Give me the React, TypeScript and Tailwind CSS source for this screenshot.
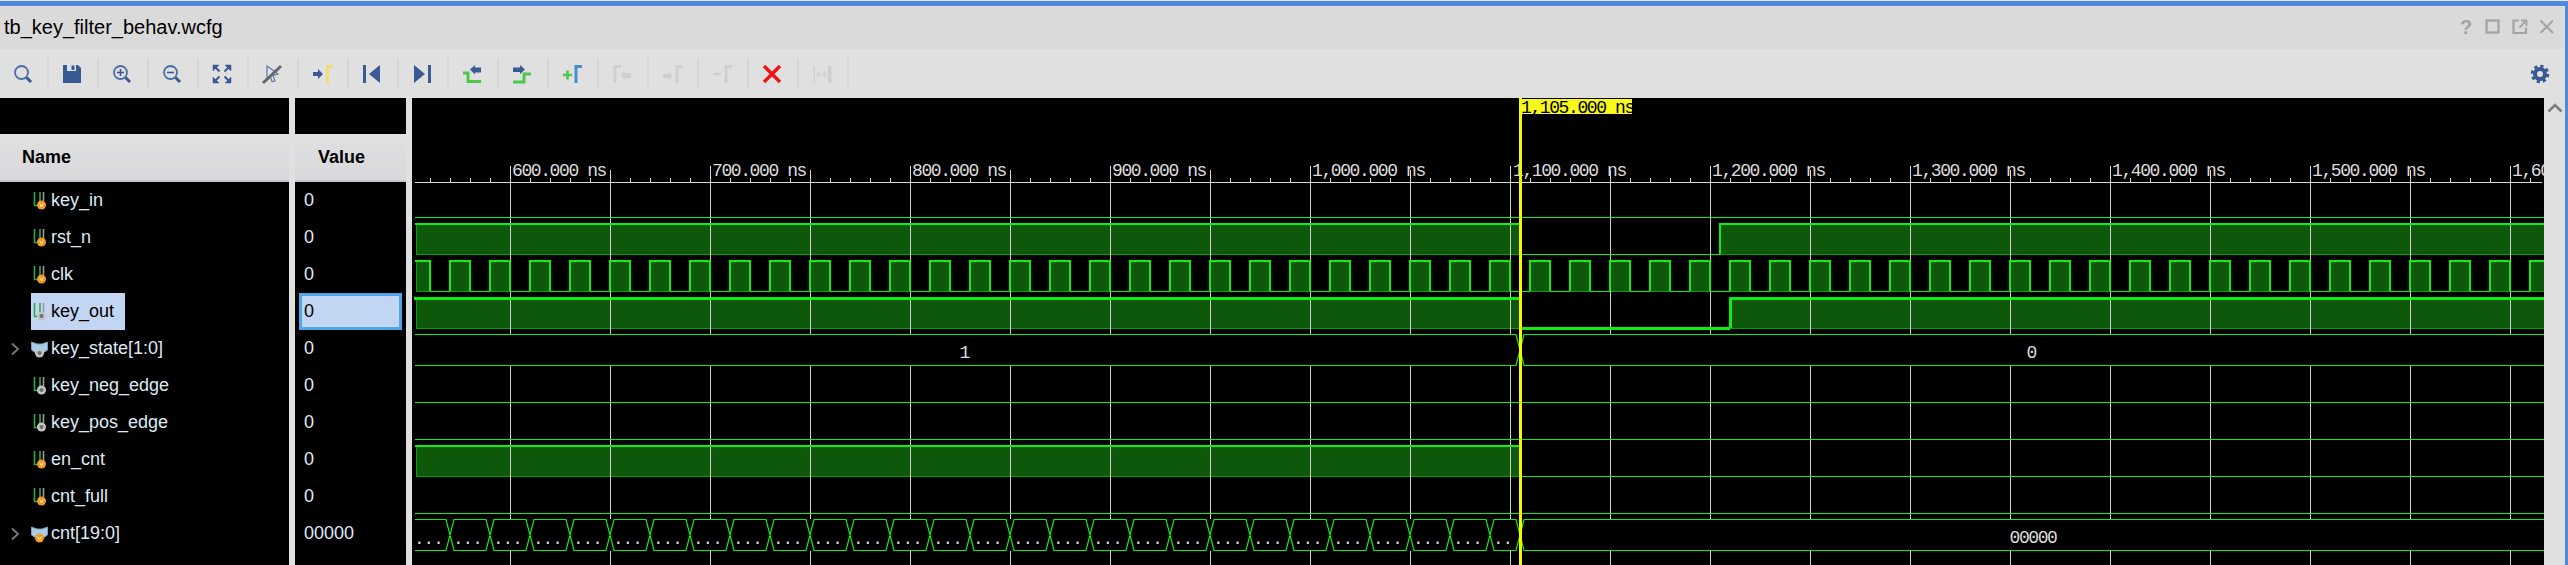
import type { ReactNode } from 'react';

const BLUE = '#3a5a94';
const GREY = '#cfcfcf';
const BRIGHT = '#10ee10';
const DARK_EDGE = '#0a9a0a';
const FILL = '#0e580c';

const X_END = 2544;
const CURSOR = 1520;

type Sig = { name: string; value: string; kind: 'in' | 'reg' | 'bus-in' | 'bus-reg' };

const signals: Sig[] = [
  { name: 'key_in', value: '0', kind: 'in' },
  { name: 'rst_n', value: '0', kind: 'in' },
  { name: 'clk', value: '0', kind: 'in' },
  { name: 'key_out', value: '0', kind: 'reg' },
  { name: 'key_state[1:0]', value: '0', kind: 'bus-reg' },
  { name: 'key_neg_edge', value: '0', kind: 'reg' },
  { name: 'key_pos_edge', value: '0', kind: 'reg' },
  { name: 'en_cnt', value: '0', kind: 'in' },
  { name: 'cnt_full', value: '0', kind: 'in' },
  { name: 'cnt[19:0]', value: '00000', kind: 'bus-in' },
];

function SignalIcon({ kind }: { kind: Sig['kind'] }) {
  const orange = kind === 'in' || kind === 'bus-in';
  const bus = kind === 'bus-in' || kind === 'bus-reg';
  return (
    <svg width="17" height="20" viewBox="0 0 17 20" className="shrink-0">
      {bus ? (
        <path d="M0.5 3 L6 5 H11 L16.5 3 V11 L12 14 H5 L0.5 11 Z" fill="#a9cde6" stroke="#7d9db5" strokeWidth="1" />
      ) : (
        <>
          <path d="M3.5 1 V14.5 H9 V1" fill="none" stroke="#2fa84a" strokeWidth="1.6" />
          <path d="M12.5 1 V10" fill="none" stroke="#9a9a9a" strokeWidth="1.6" />
        </>
      )}
      <circle cx={bus ? 8.5 : 10.5} cy="14" r="4.5" fill={orange ? '#f09a20' : '#c4c4c4'} />
      {orange ? (
        <path
          d={bus ? 'M6.8 12.6 L8.5 16 L10.2 12.6' : 'M8.8 12.6 L10.5 16 L12.2 12.6'}
          fill="none"
          stroke="#fff3d8"
          strokeWidth="1"
        />
      ) : (
        <circle cx={bus ? 8.5 : 10.5} cy="14" r="2" fill="#6e6e6e" />
      )}
    </svg>
  );
}

function Chevron() {
  return (
    <svg width="10" height="14" viewBox="0 0 10 14">
      <path d="M2 1.5 L8 7 L2 12.5" fill="none" stroke="#7a7a7a" strokeWidth="1.8" />
    </svg>
  );
}

function Ico({ children }: { children: ReactNode }) {
  return (
    <svg width="24" height="24" viewBox="0 0 24 24">
      {children}
    </svg>
  );
}

const Lens = ({ mark }: { mark?: 'plus' | 'minus' }) => (
  <>
    <circle cx="10.5" cy="10.5" r="6.5" fill="none" stroke="#4d6ea6" strokeWidth="1.8" />
    <path d="M15.5 15.5 L20 20" stroke={BLUE} strokeWidth="3" />
    {mark && <path d="M7 10.5 H14" stroke={BLUE} strokeWidth="1.6" />}
    {mark === 'plus' && <path d="M10.5 7 V14" stroke={BLUE} strokeWidth="1.6" />}
  </>
);

const toolbar: ReactNode[] = [
  <Lens key="search" />,
  <g key="save">
    <path d="M3 3 H18 L21 6 V21 H3 Z" fill={BLUE} />
    <rect x="7" y="3" width="9" height="6" fill="#dfe3ea" />
    <rect x="11.5" y="3.5" width="3" height="4.5" fill={BLUE} />
  </g>,
  <Lens key="zi" mark="plus" />,
  <Lens key="zo" mark="minus" />,
  <g key="fit" fill={BLUE} stroke={BLUE}>
    <path d="M3 3 H9 L3 9 Z" strokeWidth="0.5" />
    <path d="M21 3 H15 L21 9 Z" strokeWidth="0.5" />
    <path d="M3 21 H9 L3 15 Z" strokeWidth="0.5" />
    <path d="M21 21 H15 L21 15 Z" strokeWidth="0.5" />
    <path d="M5 5 L9.5 9.5 M19 5 L14.5 9.5 M5 19 L9.5 14.5 M19 19 L14.5 14.5" strokeWidth="2" fill="none" />
  </g>,
  <g key="snap">
    <path d="M7 4 L18 12 L13 13.5 L15 19 L12 19.5 L10.5 15 L7 18 Z" fill="#dfe6f0" stroke="#5a78a8" strokeWidth="1.2" />
    <path d="M3 21 L21 4" stroke="#676767" strokeWidth="3" />
  </g>,
  <g key="cursor">
    <path d="M3 10 H8 V7 L13 12 L8 17 V14 H3 Z" fill={BLUE} />
    <path d="M17.5 21 V4.5 H23" fill="none" stroke="#f2db72" strokeWidth="3" />
  </g>,
  <g key="prev" fill={BLUE}>
    <rect x="3" y="3" width="3" height="18" />
    <path d="M20 3 V21 L9 12 Z" />
  </g>,
  <g key="next" fill={BLUE}>
    <rect x="18" y="3" width="3" height="18" />
    <path d="M4 3 V21 L15 12 Z" />
  </g>,
  <g key="ptr">
    <path d="M3 11 H8 V19.5 H21" fill="none" stroke="#4cc94c" strokeWidth="3" />
    <path d="M10 7.5 L15 3 V5.5 H21 V10.5 H15 V12.5 Z" fill={BLUE} />
  </g>,
  <g key="ntr">
    <path d="M3 20 H14 V12 H21" fill="none" stroke="#4cc94c" strokeWidth="3" />
    <path d="M3 5.5 H10 V3 L15 7.5 L10 12 V10 H3 Z" fill={BLUE} />
  </g>,
  <g key="add">
    <path d="M3 13 H12 M7.5 8.5 V17.5" stroke="#4cc94c" strokeWidth="2.6" />
    <path d="M16 21 V4.5 H22" fill="none" stroke="#4a90c8" strokeWidth="3" />
  </g>,
  <g key="d1">
    <path d="M5 21 V4.5 H11" fill="none" stroke={GREY} strokeWidth="3" />
    <path d="M10 13 L15 9 V11 H21 V16 H15 V18 Z" fill={GREY} />
  </g>,
  <g key="d2">
    <path d="M3 12 H8 V10 L13 14 L8 18.5 V16 H3 Z" fill={GREY} />
    <path d="M17 21 V4.5 H23" fill="none" stroke={GREY} strokeWidth="3" />
  </g>,
  <g key="d3">
    <path d="M3 12 H11" stroke={GREY} strokeWidth="2.4" />
    <path d="M16 21 V4.5 H22" fill="none" stroke={GREY} strokeWidth="3" />
  </g>,
  <path key="x" d="M4 4 L20 20 M20 4 L4 20" stroke="#f01414" strokeWidth="3.4" />,
  <g key="d4">
    <rect x="3.5" y="4" width="1.5" height="17" fill={GREY} />
    <rect x="18" y="4" width="3.5" height="17" fill={GREY} />
    <path d="M7 12.5 H16 M7 12.5 L9.5 10 M7 12.5 L9.5 15 M16 12.5 L13.5 10 M16 12.5 L13.5 15" stroke={GREY} strokeWidth="1.2" fill="none" />
  </g>,
];

const gridXs = Array.from({ length: 21 }, (_, i) => 510 + i * 100);
const labels = [
  ['600.000 ns', 512],
  ['700.000 ns', 712],
  ['800.000 ns', 912],
  ['900.000 ns', 1112],
  ['1,000.000 ns', 1312],
  ['1,100.000 ns', 1513],
  ['1,200.000 ns', 1712],
  ['1,300.000 ns', 1912],
  ['1,400.000 ns', 2112],
  ['1,500.000 ns', 2312],
  ['1,600.000 ns', 2512],
] as const;

function smallTicks() {
  let d = '';
  for (let x = 430; x < X_END - 2; x += 20) {
    if ((x - 510) % 100 !== 0) d += `M${x} 178V182`;
  }
  return d;
}

function majorTicks() {
  let d = '';
  for (let x = 510; x < X_END; x += 100) {
    d += `M${x} ${(x - 510) % 200 === 0 ? 166 : 170}V182`;
  }
  return d;
}

// spans where the signal is high: edges and tops are heavier than the low runs
function Digital({ top, bottom, spans, thick }: { top: number; bottom: number; spans: [number, number][]; thick?: boolean }) {
  const start = thick ? 414 : 415;
  let high = '';
  let low = '';
  let cur = start;
  spans.forEach(([a, b]) => {
    if (a > cur) low += `M${cur} ${bottom + 0.5}H${a}`;
    high += a <= start + 1 ? `M${a} ${top}H${b}` : `M${a} ${bottom}V${top}H${b}`;
    if (b < X_END) high += `V${bottom}`;
    cur = b;
  });
  if (cur < X_END) low += `M${cur} ${bottom + 0.5}H${X_END}`;
  return (
    <g fill="none" stroke={BRIGHT} shapeRendering="crispEdges">
      <path d={low} strokeWidth={thick ? 3 : 1} />
      <path d={high} strokeWidth={thick ? 3 : 2} />
    </g>
  );
}

function Fills({ top, bottom, spans }: { top: number; bottom: number; spans: [number, number][] }) {
  return (
    <g shapeRendering="crispEdges">
      {spans.map(([a, b]) => (
        <rect key={a} x={a} y={top} width={b - a} height={bottom - top} fill={FILL} stroke={DARK_EDGE} strokeWidth="1" />
      ))}
    </g>
  );
}

function busPath(top: number, bottom: number, edges: number[]) {
  // both strands run from 415 to the end and swap at each edge
  let a = `M415 ${top}`;
  let b = `M415 ${bottom}`;
  let aTop = true;
  for (const e of edges) {
    aTop = !aTop;
    a += `H${e - 4}L${e + 4} ${aTop ? top : bottom}`;
    b += `H${e - 4}L${e + 4} ${aTop ? bottom : top}`;
  }
  return `${a}H${X_END}${b}H${X_END}`;
}

const clkSpans: [number, number][] = [[416, 430]];
for (let x = 450; x < X_END; x += 40) clkSpans.push([x, Math.min(x + 20, X_END)]);

const cntEdges: number[] = [];
for (let x = 450; x < CURSOR; x += 40) cntEdges.push(x);
cntEdges.push(CURSOR);

function Waves() {
  const mono = { fontFamily: '"Liberation Mono", monospace' };
  return (
    <svg width="2132" height="467" viewBox="412 98 2132 467" className="block shrink-0">
      <rect x="412" y="98" width="2132" height="467" fill="#000" />

      <Fills top={223} bottom={254} spans={[[416, CURSOR], [1720, X_END + 2]]} />
      <Fills top={297} bottom={328} spans={[[416, CURSOR], [1730, X_END + 2]]} />
      <Fills top={446} bottom={476} spans={[[416, CURSOR]]} />
      <Fills top={260} bottom={291} spans={clkSpans} />

      <g stroke="#cfcfcf" strokeWidth="1" shapeRendering="crispEdges">
        {gridXs.map((x) => (
          <path key={x} d={`M${x + 0.5} 182V565`} />
        ))}
      </g>
      <rect x="413" y="334" width="2131" height="32" fill="#000" />
      <rect x="413" y="519" width="2131" height="32" fill="#000" />

      <g shapeRendering="crispEdges" fill="none" stroke="#d8d8d8" strokeWidth="1">
        <path d={`M415 182.5H${X_END - 2}`} />
        <path d={smallTicks()} transform="translate(0.5 0)" />
        <path d={majorTicks()} transform="translate(0.5 0)" />
      </g>
      {labels.map(([t, x]) => (
        <text key={x} x={x} y="176" fill="#dcdcdc" fontSize="18" letterSpacing="-1.4" style={mono}>
          {t}
        </text>
      ))}

      <g fill="none" stroke={BRIGHT} strokeWidth="1" shapeRendering="crispEdges">
        <path d={`M415 217.5H${X_END}`} />
        <path d={`M415 402.5H${X_END}`} />
        <path d={`M415 439.5H${X_END}`} />
        <path d={`M415 513.5H${X_END}`} />
      </g>
      <Digital top={224} bottom={254} spans={[[415, CURSOR], [1720, X_END]]} />
      <Digital top={261} bottom={291} spans={[[415, 430], ...clkSpans.slice(1)]} />
      <Digital top={298} bottom={328} spans={[[414, CURSOR], [1730, X_END]]} thick />
      <Digital top={446} bottom={476} spans={[[415, CURSOR]]} />

      <path d={busPath(334.5, 365.5, [CURSOR])} fill="none" stroke={BRIGHT} strokeWidth="1.2" />
      <path d={busPath(519.5, 550.5, cntEdges)} fill="none" stroke={BRIGHT} strokeWidth="1.2" />

      <text x="965" y="358" fill="#dcdcdc" fontSize="18" textAnchor="middle" style={mono}>
        1
      </text>
      <text x="2032" y="358" fill="#dcdcdc" fontSize="18" textAnchor="middle" style={mono}>
        0
      </text>
      <text x="2033" y="543" fill="#dcdcdc" fontSize="18" letterSpacing="-1.4" textAnchor="middle" style={mono}>
        00000
      </text>
      {cntEdges.slice(0, -2).map((e) => (
        <text key={e} x={e + 3.5} y="544" fill="#e8e8e8" fontSize="16" style={mono}>
          ...
        </text>
      ))}
      <text x="414.5" y="544" fill="#e8e8e8" fontSize="16" style={mono}>
        ...
      </text>
      <text x="1493.5" y="544" fill="#e8e8e8" fontSize="16" style={mono}>
        ..
      </text>

      <rect x="1519" y="98" width="3" height="467" fill="#f6f600" />
      <rect x="1520" y="99" width="112" height="15" fill="#f8f81c" />
      <svg x="1520" y="99" width="112" height="15" viewBox="1520 99 112 15">
        <text x="1521" y="113" fill="#000" fontSize="18" letterSpacing="-1.4" style={mono}>
          1,105.000 ns
        </text>
      </svg>
    </svg>
  );
}

export default function App() {
  return (
    <div className="h-[565px] w-[2568px] overflow-hidden bg-[#e0e0e0] font-['Liberation_Sans'] flex flex-col">
      <div className="h-px bg-[#dfe8f6]" />
      <div className="h-[5px] bg-[#5088dc]" />
      <div className="flex flex-1 min-h-0">
        <div className="flex flex-col flex-1 min-w-0">
          <div className="h-[43px] bg-[#dadada] flex items-center pl-1 pb-[2px] text-[20px] text-black">
            <span className="flex-1">tb_key_filter_behav.wcfg</span>
            <div className="flex items-center gap-[9px] pr-[9px] text-[#a3a3a3]">
              <span className="w-[18px] text-center text-[20px] font-bold leading-none">?</span>
              <svg width="18" height="18" viewBox="0 0 18 18">
                <rect x="2.5" y="2.5" width="12" height="12" fill="none" stroke="#a3a3a3" strokeWidth="2.2" />
              </svg>
              <svg width="18" height="18" viewBox="0 0 18 18">
                <path d="M8 2.5 H2.5 V15 H15 V9.5" fill="none" stroke="#a3a3a3" strokeWidth="2.2" />
                <path d="M8.5 9.5 L14 4 M10 2.5 H15.5 V8" fill="none" stroke="#a3a3a3" strokeWidth="1.8" />
              </svg>
              <svg width="18" height="18" viewBox="0 0 18 18">
                <path d="M2.5 2.5 L15 15 M15 2.5 L2.5 15" fill="none" stroke="#a3a3a3" strokeWidth="2" />
              </svg>
            </div>
          </div>
          <div className="h-[49px] bg-[#e0e0e0] flex items-center">
            {toolbar.map((icon, i) => (
              <div
                key={i}
                className={`${i === 0 ? 'w-[49px]' : 'w-[50px]'} h-[31px] pr-[2px] flex items-center justify-center border-r-2 border-[#d6d6d6]`}
              >
                <Ico>{icon}</Ico>
              </div>
            ))}
            <div className="flex-1" />
            <svg width="20" height="20" viewBox="0 0 20 20" className="mr-[15px]">
              <circle cx="10" cy="10" r="7.8" fill="none" stroke={BLUE} strokeWidth="3" strokeDasharray="3.2 2.93" />
              <circle cx="10" cy="10" r="5" fill="none" stroke={BLUE} strokeWidth="4" />
            </svg>
          </div>
          <div className="flex flex-1 min-h-0 bg-[#e0e0e0]">
            <div className="w-[289px] bg-black flex flex-col">
              <div className="h-9" />
              <div className="h-[48px] bg-linear-to-b from-[#e0e0e0] to-[#d9d9dd] border-b-2 border-[#c8c8c8] flex items-center pl-[22px] text-[18px] font-bold text-black">
                Name
              </div>
              {signals.map((s) => {
                const selected = s.name === 'key_out';
                return (
                  <div key={s.name} className="h-[37px] flex items-center text-[18px] shrink-0">
                    <div className="w-[31px] flex justify-center pr-[2px]">{s.kind.startsWith('bus') && <Chevron />}</div>
                    <div
                      className={`h-[37px] flex items-center gap-[3px] ${selected ? 'bg-[#c2d5f2] text-black pr-[11px]' : 'text-[#dfe9f4]'}`}
                    >
                      <SignalIcon kind={s.kind} />
                      <span>{s.name}</span>
                    </div>
                  </div>
                );
              })}
            </div>
            <div className="w-[111px] ml-[6px] bg-black flex flex-col">
              <div className="h-9" />
              <div className="h-[48px] bg-linear-to-b from-[#e0e0e0] to-[#d9d9dd] border-b-2 border-[#c8c8c8] flex items-center pl-[23px] text-[18px] font-bold text-black">
                Value
              </div>
              {signals.map((s) =>
                s.name === 'key_out' ? (
                  <div key={s.name} className="h-[37px] ml-1 mr-1 bg-[#c2d5f2] border-[3px] border-[#4fa5e5] flex items-center pl-[2px] text-[18px] text-black shrink-0">
                    {s.value}
                  </div>
                ) : (
                  <div key={s.name} className="h-[37px] flex items-center pl-[9px] text-[18px] text-[#dfe9f4] shrink-0">
                    {s.value}
                  </div>
                ),
              )}
            </div>
            <div className="w-[6px]" />
            <Waves />
            <div className="w-[21px] flex flex-col items-center pt-[5px]">
              <svg width="16" height="10" viewBox="0 0 16 10">
                <path d="M1.5 8.5 L8 2 L14.5 8.5" fill="none" stroke="#7d7d7d" strokeWidth="2.6" />
              </svg>
            </div>
          </div>
        </div>
        <div className="w-[3px] bg-[#5088dc]" />
      </div>
    </div>
  );
}
